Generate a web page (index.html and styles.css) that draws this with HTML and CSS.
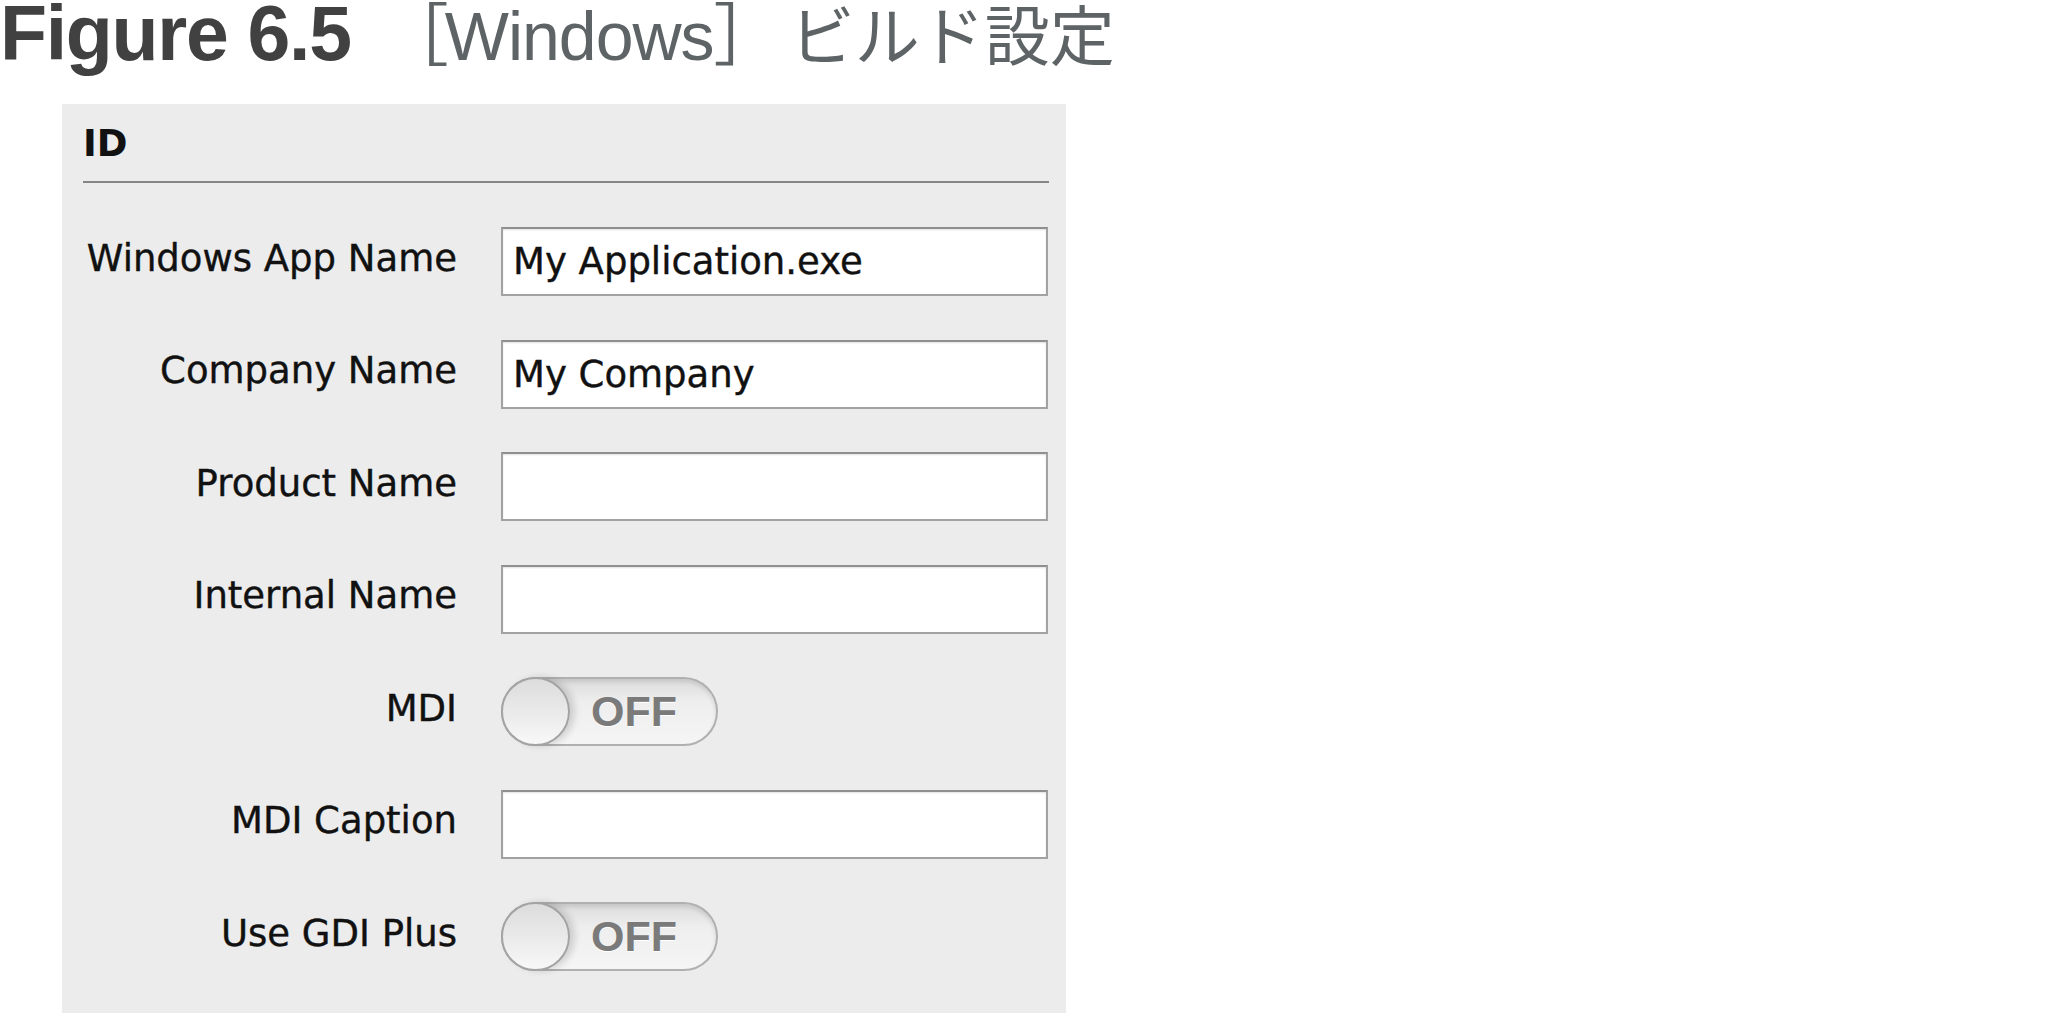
FILE: index.html
```html
<!DOCTYPE html>
<html lang="ja">
<head>
<meta charset="utf-8">
<title>Figure 6.5 Windows ビルド設定</title>
<link rel="stylesheet" href="styles.css">
</head>
<body>
<h1 class="caption"><span class="fig">Figure 6.5</span><span class="sub"><span class="br-open">［</span><span class="win">Windows</span><span class="br-close">］</span><span class="jp">ビルド設定</span></span></h1>
<section class="panel">
  <div class="group-title">ID</div>
  <div class="rule"></div>
  <div class="form">
    <div class="label">Windows App Name</div>
    <div class="field">My Application.exe</div>

    <div class="label">Company Name</div>
    <div class="field">My Company</div>

    <div class="label">Product Name</div>
    <div class="field"></div>

    <div class="label">Internal Name</div>
    <div class="field"></div>

    <div class="label">MDI</div>
    <div class="switch"><span class="knob"></span><span class="switch-text">OFF</span></div>

    <div class="label">MDI Caption</div>
    <div class="field"></div>

    <div class="label">Use GDI Plus</div>
    <div class="switch"><span class="knob"></span><span class="switch-text">OFF</span></div>
  </div>
</section>
</body>
</html>
```

FILE: styles.css
```css
html, body {
  margin: 0;
  padding: 0;
  background: #ffffff;
}

body {
  width: 2048px;
  height: 1013px;
  overflow: hidden;
}

.caption {
  margin: 0;
  height: 104px;
  font-family: "Liberation Sans", "Noto Sans CJK JP", sans-serif;
  font-size: 77px;
  line-height: 67px;
  font-weight: normal;
  white-space: nowrap;
}

.fig {
  display: inline-block;
  font-weight: bold;
  letter-spacing: -1.3px;
  color: #414141;
}

.sub {
  font-size: 68px;
  color: #5e6466;
}

.br-open {
  margin-left: 30px;
  margin-right: -4px;
}

.win {
  letter-spacing: -1px;
}

.br-close {
  margin-left: 0;
}

.jp {
  margin-left: 8px;
  font-size: 65px;
}

.panel {
  margin-left: 62px;
  width: 1004px;
  height: 909px;
  box-sizing: border-box;
  padding: 21px 17px 0 21px;
  background: #ececec;
  font-family: "DejaVu Sans", "Noto Sans", sans-serif;
  font-size: 37px;
  line-height: 37px;
  color: #111111;
}

.group-title {
  font-weight: bold;
}

.rule {
  margin-top: 19px;
  height: 0;
  border-top: 2px solid #858585;
}

.form {
  margin-top: 44px;
  display: grid;
  grid-template-columns: 374px 547px;
  grid-auto-rows: 69px;
  column-gap: 44px;
  row-gap: 43.5px;
}

.label {
  align-self: center;
  padding-bottom: 7px;
  text-align: right;
  white-space: nowrap;
  -webkit-text-stroke: 0.4px #111111;
}

.field {
  box-sizing: border-box;
  height: 69px;
  display: flex;
  align-items: center;
  padding-left: 10px;
  background: #ffffff;
  border: 2px solid #a2a2a2;
  border-top-color: #8f8f8f;
  box-shadow: inset 0 1px 2px rgba(0, 0, 0, 0.12);
  white-space: nowrap;
  -webkit-text-stroke: 0.4px #111111;
}

.switch {
  position: relative;
  box-sizing: border-box;
  width: 217px;
  height: 69px;
  display: flex;
  align-items: center;
  border: 2px solid #b0b0b0;
  border-radius: 35px;
  background: linear-gradient(#dcdcdc 0%, #eeeeee 35%, #f5f5f5 100%);
  box-shadow: inset 0 3px 4px rgba(0, 0, 0, 0.10);
}

.knob {
  position: absolute;
  left: -2px;
  top: -2px;
  width: 69px;
  height: 69px;
  box-sizing: border-box;
  border-radius: 50%;
  border: 2px solid #a3a3a3;
  background: linear-gradient(#dcdcdc 0%, #ebebeb 55%, #f8f8f8 100%);
  box-shadow: 5px 0 7px rgba(0, 0, 0, 0.14);
}

.switch-text {
  padding-left: 88px;
  font-family: "Liberation Sans", sans-serif;
  font-weight: bold;
  font-size: 43px;
  line-height: 43px;
  color: #7a7a7a;
  text-shadow: 0 1px 0 #ffffff;
}
```
